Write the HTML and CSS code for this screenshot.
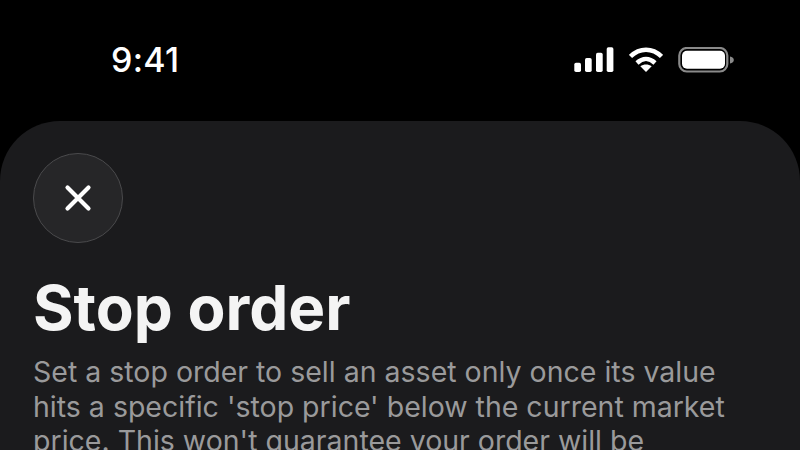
FILE: index.html
```html
<!DOCTYPE html>
<html lang="en">
<head>
<meta charset="utf-8">
<title>Stop order</title>
<link rel="stylesheet" href="styles.css">
</head>
<body>
<div class="screen">
  <header class="status">
    <span class="time">9:41</span>
    <div class="status-icons">
      <svg width="40" height="25" viewBox="0 0 40 25" fill="#fff"><rect x="0.300" y="15.700" width="6.700" height="9.300" rx="1.700"/><rect x="11" y="11" width="6.700" height="14" rx="1.700"/><rect x="22" y="5.700" width="6.700" height="19.300" rx="1.700"/><rect x="32.700" y="0.300" width="6.700" height="24.700" rx="1.700"/></svg>
      <svg width="34" height="25" viewBox="0 0 34 25" fill="none"><path d="M1.500 9.500C10.500 0.500 23.500 0.500 32.500 9.500" stroke="#fff" stroke-width="4.500"/><path d="M8 16C13.500 10.800 20.500 10.800 26 16" stroke="#fff" stroke-width="4.500"/><path d="M17 25L11.300 19.300C14.800 16.800 19.200 16.800 22.700 19.300Z" fill="#fff"/></svg>
      <svg width="56" height="26" viewBox="0 0 56 26" fill="none"><rect x="1.300" y="1" width="48" height="23.500" rx="7.500" stroke="#8a8a8a" stroke-width="2.200"/><rect x="4" y="3.700" width="43" height="18" rx="5" fill="#fff"/><path d="M52 9.500C54.500 10 55.800 11.300 55.800 13C55.800 14.700 54.500 16 52 16.500Z" fill="#8a8a8a"/></svg>
    </div>
  </header>
  <main class="sheet">
    <button class="close" type="button" aria-label="Close">
      <svg width="28" height="28" viewBox="0 0 28 28" fill="none"><path d="M3.500 3.500L24.500 24.500M24.500 3.500L3.500 24.500" stroke="#fff" stroke-width="4.200" stroke-linecap="round"/></svg>
    </button>
    <h1 class="title">Stop order</h1>
    <p class="desc">Set a stop order to sell an asset only once its value hits a specific 'stop price' below the current market price. This won't guarantee your order will be</p>
  </main>
</div>
</body>
</html>
```
FILE: styles.css
```css
* { box-sizing: border-box; }
html, body { margin: 0; padding: 0; background: #000; }
body { width: 800px; height: 450px; overflow: hidden; font-family: Inter, "Liberation Sans", sans-serif; }
.screen { display: flex; flex-direction: column; height: 450px; overflow: hidden; }
.status { flex: none; height: 121px; display: flex; align-items: flex-start; justify-content: space-between; padding: 40px 66px 0 111px; }
.time { color: #fff; font-size: 34px; font-weight: 500; line-height: 40px; letter-spacing: 0.3px; }
.status-icons { display: flex; align-items: flex-start; gap: 15px; padding-top: 7px; }
.sheet { flex: 1; background: #1b1b1d; border-radius: 60px 60px 0 0; padding: 32px 33px 0; }
.close { display: flex; align-items: center; justify-content: center; width: 90px; height: 90px; padding: 0; border-radius: 50%; border: 1.500px solid #4a4a4c; background: #262628; }
.title { margin: 30px 0 0; color: #f4f4f4; font-size: 62px; font-weight: 700; line-height: 70px; letter-spacing: 0; }
.desc { margin: 12px 0 0; width: 700px; color: #9a9a9b; font-size: 28.500px; line-height: 34.500px; font-weight: 400; }
```
